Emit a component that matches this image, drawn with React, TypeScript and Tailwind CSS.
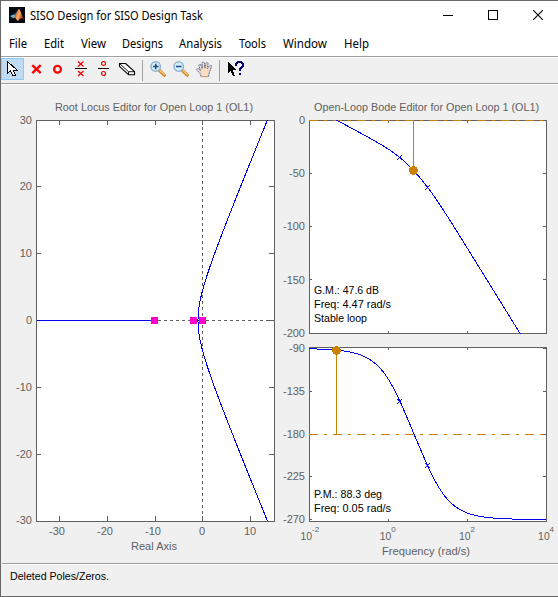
import React from 'react';

const menus = [
  { label: 'File', left: 'ml-[9px]', width: 18 },
  { label: 'Edit', left: 'ml-[17px]', width: 20 },
  { label: 'View', left: 'ml-[17px]', width: 25 },
  { label: 'Designs', left: 'ml-4', width: 41 },
  { label: 'Analysis', left: 'ml-4', width: 43 },
  { label: 'Tools', left: 'ml-[17px]', width: 27 },
  { label: 'Window', left: 'ml-[17px]', width: 44 },
  { label: 'Help', left: 'ml-[17px]', width: 25 },
];

// One line of text fitted to a fixed width
const FitText = ({ children, width, size = 12 }: { children: string; width: number; size?: number }) => (
  <svg width={width + 2} height="18" className="block shrink-0 overflow-visible">
    <text x="0" y="13" fontSize={size} textLength={width} lengthAdjust="spacingAndGlyphs">
      {children}
    </text>
  </svg>
);

const MatlabLogo = () => (
  <svg width="16" height="16" viewBox="0 0 16 16" className="shrink-0">
    <defs>
      <linearGradient id="peak" x1="0" x2="1" y1="0" y2="0.4">
        <stop offset="0" stopColor="#7a2210" />
        <stop offset="0.4" stopColor="#e8702a" />
        <stop offset="0.6" stopColor="#f6b26b" />
        <stop offset="1" stopColor="#b5300f" />
      </linearGradient>
    </defs>
    <rect width="16" height="16" fill="#050a12" />
    <path d="M1 9L5 7.2L7 8.8L4.2 11.4Z" fill="#5fb1cf" />
    <path d="M5 7.2C7 6.4 8 3.6 10 2L7 8.8Z" fill="#356b93" />
    <path d="M4.2 11.4C6.5 9.5 8.5 3 10 2C11.4 2.4 12.6 8.4 15 12.5C12.5 10.6 11 11 9.2 14C8 14.2 7.4 11.6 6 10.8Z" fill="url(#peak)" />
  </svg>
);

const CursorIcon = () => (
  <svg width="16" height="18" viewBox="0 0 16 18" shapeRendering="crispEdges">
    <path d="M1.5 1.5V13.5L4.5 10.5L6.5 15.5H9.5L7.5 10.5H11.5Z" fill="#fff" stroke="#000" />
  </svg>
);

const PoleIcon = () => (
  <svg width="16" height="16" viewBox="0 0 16 16">
    <path d="M4.3 4.2L12.7 12.2M12.7 4.2L4.3 12.2" stroke="#f00" strokeWidth="2.3" />
  </svg>
);

const ZeroIcon = () => (
  <svg width="16" height="16" viewBox="0 0 16 16">
    <circle cx="6.5" cy="8.2" r="3.4" fill="none" stroke="#f00" strokeWidth="2.2" />
  </svg>
);

const PolePairIcon = () => (
  <svg width="16" height="16" viewBox="0 0 16 16">
    <path d="M4 0.5L9.5 5.5M9.5 0.5L4 5.5M4 10L9.5 15M9.5 10L4 15" stroke="#e00" strokeWidth="1.2" />
    <path d="M1 7.5H13" stroke="#000" />
  </svg>
);

const ZeroPairIcon = () => (
  <svg width="16" height="16" viewBox="0 0 16 16">
    <circle cx="6.5" cy="2.5" r="2" fill="none" stroke="#e00" strokeWidth="1.2" />
    <circle cx="6.5" cy="12.5" r="2" fill="none" stroke="#e00" strokeWidth="1.2" />
    <path d="M1 7.5H12" stroke="#000" />
  </svg>
);

const EraserIcon = () => (
  <svg width="16" height="16" viewBox="0 0 16 16" className="overflow-visible">
    <path d="M-0.5 2.5H5.5L14.5 10.7V13.7H8.5L-0.5 5.3Z" fill="#fff" stroke="#000" strokeWidth="1.1" strokeLinejoin="round" />
    <path d="M-0.5 2.5L8.5 10.7H14.5M8.5 10.7V13.7" fill="none" stroke="#000" strokeWidth="0.9" />
  </svg>
);

const ZoomIcon = ({ plus = false }: { plus?: boolean }) => (
  <svg width="16" height="16" viewBox="0 0 16 16">
    <path d="M9.5 9.5L14.3 14.2" stroke="#c98a35" strokeWidth="3.2" strokeLinecap="round" />
    <path d="M10 9.5L14.4 13.6" stroke="#f8c878" strokeWidth="1.4" strokeLinecap="round" />
    <circle cx="5.7" cy="5.5" r="4.7" fill="#d5eff9" stroke="#8fb2d4" strokeWidth="1.5" />
    <path d={plus ? 'M3 5.5H8.5M5.75 2.8V8.2' : 'M3 5.5H8.5'} stroke="#174a86" strokeWidth="1.5" />
  </svg>
);

const HandIcon = () => (
  <svg width="17" height="17" viewBox="0 0 17 17">
    <path
      d="M5 15.5L4.5 13L1 9.2C0 7.8 1.7 7 2.7 8L4.5 9.7L2.9 4.6C2.6 3 4.4 2.7 4.9 4L6.4 7.6L6 2.2C6 .6 8 .5 8.3 2L8.9 7.2L10 2.3C10.4 .9 12.3 1.3 12 2.8L11.5 7.7L13.6 4.8C14.5 3.6 16 4.6 15.4 5.8L13.5 11L12.4 15.5Z"
      fill="#fbdcc0"
      stroke="#526f9e"
      strokeWidth="1"
      strokeDasharray="2 0.6"
    />
    <path d="M5 15.7H12.5" stroke="#d8a476" />
  </svg>
);

const HelpIcon = () => (
  <svg width="17" height="16" viewBox="0 0 17 16" shapeRendering="crispEdges">
    <path d="M0 1V12L2.5 9.5L5 15H7L5 9H8.5Z" fill="#000" />
    <path d="M8 5V3L10 1H13L15 3V5L12 8V10" fill="none" stroke="#000080" strokeWidth="2" />
    <rect x="11" y="12" width="2" height="2" fill="#000080" />
  </svg>
);

const ToolCell = ({ children }: { children: React.ReactNode }) => (
  <div className="flex h-full w-[23px] shrink-0 items-start pl-1 pt-1">{children}</div>
);

type Sample = [number, number];
const toPoints = (samples: Sample[]) => samples.map(([x, y]) => `${x.toFixed(2)},${y.toFixed(2)}`).join(' ');

const GREY = '#606060';
const ORANGE = '#cc8000';
const BLUE = '#0000f0';

// Open loop: 1 / (s (s + 2) (s + 10))
const magnitude = (w: number) => -20 * Math.log10(w) - 10 * Math.log10(w * w + 4) - 10 * Math.log10(w * w + 100);
const phase = (w: number) => -90 - ((Math.atan(w / 2) + Math.atan(w / 10)) * 180) / Math.PI;
const freqX = (w: number) => 309.3 + 39.5 * (Math.log10(w) + 2);
const magY = (db: number) => 120.3 - (db * 213) / 200;
const phaseY = (deg: number) => 348.5 + (-90 - deg) * 0.95;

const freqs = Array.from({ length: 121 }, (_, i) => 10 ** (-2 + i / 20));
const magCurve: Sample[] = freqs.map((w) => [freqX(w), magY(magnitude(w))]);
const phaseCurve: Sample[] = freqs.map((w) => [freqX(w), phaseY(phase(w))]);
const locus: Sample[] = Array.from({ length: 121 }, (_, i) => {
  const w = -30 + i / 2;
  const sigma = (-24 + Math.sqrt(576 - 12 * (20 - w * w))) / 6;
  return [202.5 + 4.78 * sigma, 320.5 - 6.683 * w];
});

const Label = ({ x, y, w, children, fill = GREY }: { x: number; y: number; w?: number; children: string; fill?: string }) => (
  <text x={x} y={y} fill={fill} textLength={w} lengthAdjust="spacingAndGlyphs">
    {children}
  </text>
);

const RootLocus = () => (
  <svg width="279" height="478" viewBox="1 85 279 478" fontSize="11" className="block shrink-0">
    <Label x={55} y={111} w={198}>Root Locus Editor for Open Loop 1 (OL1)</Label>
    <g shapeRendering="crispEdges" fill="none">
      <rect x="36.5" y="120.5" width="238" height="401" fill="#fff" stroke={GREY} />
      {[59.5, 107.5, 155.5, 202.5, 250.5].map((x) => (
        <path key={x} d={`M${x} 121V125M${x} 521V516`} stroke={GREY} />
      ))}
      {[186.5, 253.5, 320.5, 387.5, 454.5].map((y) => (
        <path key={y} d={`M37 ${y}H41M274 ${y}H269`} stroke={GREY} />
      ))}
      <path d="M202.5 121V521M158 320.5H274" stroke={GREY} strokeDasharray="3 3" />
      <path d="M37 320.5H154M193 320.5H202" stroke={BLUE} />
      <polyline points={toPoints(locus)} stroke={BLUE} />
      {[151, 190, 199].map((x) => (
        <rect key={x} x={x} y="317" width="7" height="7" fill="#ff00cc" />
      ))}
    </g>
    <g textAnchor="end">
      {[30, 20, 10, 0, -10, -20, -30].map((v, i) => (
        <Label key={v} x={32} y={124 + Math.floor(i * 66.8)}>{String(v)}</Label>
      ))}
    </g>
    <g textAnchor="middle">
      <Label x={57} y={535}>-30</Label>
      <Label x={105} y={535}>-20</Label>
      <Label x={153} y={535}>-10</Label>
      <Label x={202} y={535}>0</Label>
      <Label x={250} y={535}>10</Label>
    </g>
    <Label x={131} y={550} w={46}>Real Axis</Label>
  </svg>
);

const Cross = ({ x, y }: { x: number; y: number }) => (
  <path d={`M${x - 2.5} ${y - 2.5}l5 5M${x + 2.5} ${y - 2.5}l-5 5`} stroke={BLUE} />
);

const MagnitudePlot = () => (
  <svg width="278" height="255" viewBox="280 85 278 255" fontSize="11" className="block">
    <Label x={314} y={111} w={225}>Open-Loop Bode Editor for Open Loop 1 (OL1)</Label>
    <clipPath id="mag-clip">
      <rect x="309" y="120" width="238" height="214" />
    </clipPath>
    <g shapeRendering="crispEdges" fill="none">
      <rect x="309.5" y="120.5" width="237" height="213" fill="#fff" stroke={GREY} />
      {[388.5, 467.5].map((x) => (
        <path key={x} d={`M${x} 121V123M${x} 333V331`} stroke={GREY} />
      ))}
      {[173.5, 226.5, 279.5].map((y) => (
        <path key={y} d={`M310 ${y}H312M546 ${y}H543`} stroke={GREY} />
      ))}
      <path d="M309 120.5H546" stroke={ORANGE} strokeDasharray="9 6 3 6" />
      <polyline points={toPoints(magCurve)} stroke={BLUE} clipPath="url(#mag-clip)" />
      <Cross x={399.5} y={157.5} />
      <Cross x={427.5} y={187.5} />
      <path d="M413.5 121V170" stroke={ORANGE} />
      <circle cx="413.5" cy="170.5" r="4.5" fill={ORANGE} />
    </g>
    <g textAnchor="end">
      {[0, -50, -100, -150, -200].map((v, i) => (
        <Label key={v} x={305} y={124 + Math.round(i * 53.2)}>{String(v)}</Label>
      ))}
    </g>
    <Label x={314} y={294} w={65} fill="#000">G.M.: 47.6 dB</Label>
    <Label x={314} y={308} w={77} fill="#000">Freq: 4.47 rad/s</Label>
    <Label x={314} y={322} w={53} fill="#000">Stable loop</Label>
  </svg>
);

const PhasePlot = () => (
  <svg width="278" height="223" viewBox="280 340 278 223" fontSize="11" className="block">
    <g shapeRendering="crispEdges" fill="none">
      <rect x="309.5" y="347.5" width="237" height="174" fill="#fff" stroke={GREY} />
      {[388.5, 467.5].map((x) => (
        <path key={x} d={`M${x} 348V350M${x} 521V519`} stroke={GREY} />
      ))}
      {[348.5, 391.5, 434.5, 476.5, 519.5].map((y) => (
        <path key={y} d={`M310 ${y}H312M546 ${y}H543`} stroke={GREY} />
      ))}
      <path d="M309 434.5H546" stroke={ORANGE} strokeDasharray="9 6 3 6" />
      <polyline points={toPoints(phaseCurve)} stroke={BLUE} />
      <Cross x={399.5} y={401.5} />
      <Cross x={427.5} y={465.5} />
      <path d="M336.5 350V434" stroke={ORANGE} />
      <circle cx="336.5" cy="350.5" r="4.5" fill={ORANGE} />
    </g>
    <g textAnchor="end">
      <Label x={305} y={352}>-90</Label>
      <Label x={305} y={395}>-135</Label>
      <Label x={305} y={438}>-180</Label>
      <Label x={305} y={480}>-225</Label>
      <Label x={305} y={523}>-270</Label>
    </g>
    {[-2, 0, 2, 4].map((exp, i) => (
      <g key={exp}>
        <Label x={300.5 + i * 79.2} y={540} w={11.6}>10</Label>
        <text x={312 + i * 79.2} y={532} fontSize="8" fill={GREY}>{exp}</text>
      </g>
    ))}
    <Label x={314} y={498} w={68} fill="#000">P.M.: 88.3 deg</Label>
    <Label x={314} y={512} w={77} fill="#000">Freq: 0.05 rad/s</Label>
    <Label x={382} y={555} w={88}>Frequency (rad/s)</Label>
  </svg>
);

const App = () => {
  return (
    <div className="flex h-[597px] w-[558px] flex-col overflow-hidden border-y border-l border-[#686868] bg-[#f0f0f0] font-['Liberation_Sans',sans-serif] text-black">
      <div className="flex h-[31px] shrink-0 items-start bg-white pl-2 pt-1.5 font-['Noto_Sans',sans-serif]">
        <MatlabLogo />
        <div className="ml-[5px]">
          <FitText width={173}>SISO Design for SISO Design Task</FitText>
        </div>
        <div className="ml-auto mr-[15px] flex gap-[35px] pt-[3px]">
          <svg width="10" height="10" shapeRendering="crispEdges"><path d="M0 5.5H10" stroke="#000" /></svg>
          <svg width="10" height="10" shapeRendering="crispEdges"><rect x="0.5" y="0.5" width="9" height="9" fill="none" stroke="#000" /></svg>
          <svg width="10" height="10"><path d="M0 0L10 10M10 0L0 10" stroke="#000" strokeWidth="1.1" /></svg>
        </div>
      </div>
      <div className="flex h-[24px] shrink-0 bg-white pt-[3px] font-['Noto_Sans',sans-serif]">
        {menus.map((m) => (
          <div key={m.label} className={`${m.left} -mr-0.5 first:ml-2`}>
            <FitText width={m.width}>{m.label}</FitText>
          </div>
        ))}
      </div>
      <div className="flex h-[28px] shrink-0 items-start border-t border-b border-[#a0a0a0] shadow-[inset_0_1px_0_#fff]">
        <div className="mt-px flex h-[22px] w-[23px] shrink-0 items-start border border-[#90c8f6] bg-[#c0dcf3] pl-1 pt-px">
          <CursorIcon />
        </div>
        <ToolCell><PoleIcon /></ToolCell>
        <ToolCell><ZeroIcon /></ToolCell>
        <ToolCell><PolePairIcon /></ToolCell>
        <ToolCell><ZeroPairIcon /></ToolCell>
        <ToolCell><EraserIcon /></ToolCell>
        <div className="ml-[3px] mr-[3px] mt-[3px] h-[21px] w-px bg-[#a0a0a0]" />
        <ToolCell><ZoomIcon plus /></ToolCell>
        <ToolCell><ZoomIcon /></ToolCell>
        <ToolCell><HandIcon /></ToolCell>
        <div className="mx-1 mt-[3px] h-[21px] w-px bg-[#a0a0a0]" />
        <ToolCell><HelpIcon /></ToolCell>
      </div>
      <div className="h-px shrink-0 bg-white" />
      <div className="flex h-[478px] shrink-0">
        <RootLocus />
        <div className="flex flex-col">
          <MagnitudePlot />
          <PhasePlot />
        </div>
      </div>
      <div className="ml-px flex h-[33px] shrink-0 border-t border-[#a0a0a0] pl-2 pt-[3px] shadow-[inset_0_1px_0_#fff]">
        <FitText width={99} size={11}>Deleted Poles/Zeros.</FitText>
      </div>
    </div>
  );
};

export default App;
